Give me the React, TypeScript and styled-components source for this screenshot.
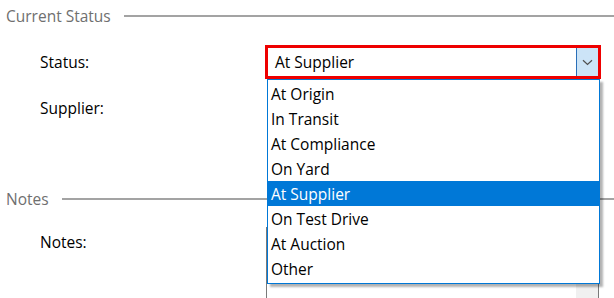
import React from "react";
import styled, { createGlobalStyle } from "styled-components";

const Global = createGlobalStyle`
  html, body { margin: 0; padding: 0; background: #ffffff; }
  body { font-family: "Open Sans", "Noto Sans", sans-serif; }
`;

const Page = styled.div`
  width: 614px;
  height: 298px;
  overflow: hidden;
  background: #ffffff;
  display: flex;
  flex-direction: column;
  & > * { flex-shrink: 0; }
`;

const SectionHeader = styled.div<{ $mt?: number }>`
  display: flex;
  align-items: center;
  height: 32px;
  padding-left: 6px;
  gap: 13px;
  margin-top: ${(p) => p.$mt ?? 0}px;
`;

const SectionTitle = styled.span`
  font-size: 15.5px;
  color: #6f6f6f;
  white-space: nowrap;
`;

const Rule = styled.div`
  flex: 1;
  height: 2px;
  background: #a3a3a3;
`;

const Row = styled.div<{ $mt: number; $h: number; $align?: string }>`
  display: grid;
  grid-template-columns: 225px 336px;
  padding-left: 40px;
  margin-top: ${(p) => p.$mt}px;
  height: ${(p) => p.$h}px;
  align-items: ${(p) => p.$align ?? "center"};
`;

const Label = styled.span<{ $pt?: number }>`
  font-size: 15.5px;
  color: #000000;
  padding-top: ${(p) => p.$pt ?? 0}px;
`;

const ComboWrap = styled.div`
  position: relative;
  height: 100%;
`;

const ComboBox = styled.div<{ $focused?: boolean }>`
  box-sizing: border-box;
  height: 100%;
  display: flex;
  border: 3px solid ${(p) => (p.$focused ? "#ee0000" : "#7a7a7a")};
  background: #ffffff;
`;

const ComboValue = styled.div`
  flex: 1;
  display: flex;
  align-items: center;
  padding-left: 7px;
  font-size: 15.5px;
  color: #000000;
`;

const ComboButton = styled.div`
  width: 21px;
  display: flex;
  align-items: center;
  justify-content: center;
  background: #cce4f7;
  border-left: 1px solid #2a6fb8;
`;

const DropList = styled.ul`
  position: absolute;
  top: 100%;
  left: 2px;
  width: 333px;
  box-sizing: border-box;
  margin: 0;
  padding: 1px 0 2px;
  list-style: none;
  background: #ffffff;
  border: 1px solid #0078d7;
  box-shadow: 3px 3px 2px rgba(0, 0, 0, 0.3);
  z-index: 5;
`;

const DropItem = styled.li<{ $selected?: boolean }>`
  height: 25px;
  display: flex;
  align-items: center;
  padding-left: 3px;
  font-size: 15.5px;
  color: ${(p) => (p.$selected ? "#ffffff" : "#000000")};
  background: ${(p) => (p.$selected ? "#0078d7" : "transparent")};
`;

const TextArea = styled.div`
  box-sizing: border-box;
  margin-left: 1px;
  width: 333px;
  height: 120px;
  border: 1px solid #7a7a7a;
  display: flex;
  justify-content: flex-end;
  background: #ffffff;
`;

const ScrollTrack = styled.div`
  width: 22px;
  background: #f0f0f0;
`;

const options = [
  "At Origin",
  "In Transit",
  "At Compliance",
  "On Yard",
  "At Supplier",
  "On Test Drive",
  "At Auction",
  "Other",
];

const Chevron = () => (
  <svg width="11" height="7" viewBox="0 0 11 7">
    <path d="M1 1.2 L5.5 5.5 L10 1.2" fill="none" stroke="#505050" strokeWidth="1.2" />
  </svg>
);

export default function App() {
  const selected = "At Supplier";
  return (
    <>
      <Global />
      <Page>
        <SectionHeader>
          <SectionTitle>Current Status</SectionTitle>
          <Rule />
        </SectionHeader>
        <Row $mt={13} $h={34}>
          <Label>Status:</Label>
          <ComboWrap>
            <ComboBox $focused>
              <ComboValue>{selected}</ComboValue>
              <ComboButton>
                <Chevron />
              </ComboButton>
            </ComboBox>
            <DropList>
              {options.map((o) => (
                <DropItem key={o} $selected={o === selected}>
                  {o}
                </DropItem>
              ))}
            </DropList>
          </ComboWrap>
        </Row>
        <Row $mt={12} $h={34}>
          <Label>Supplier:</Label>
          <ComboWrap />
        </Row>
        <SectionHeader $mt={58}>
          <SectionTitle>Notes</SectionTitle>
          <Rule />
        </SectionHeader>
        <Row $mt={12} $h={120} $align="start">
          <Label $pt={4}>Notes:</Label>
          <TextArea>
            <ScrollTrack />
          </TextArea>
        </Row>
      </Page>
    </>
  );
}
